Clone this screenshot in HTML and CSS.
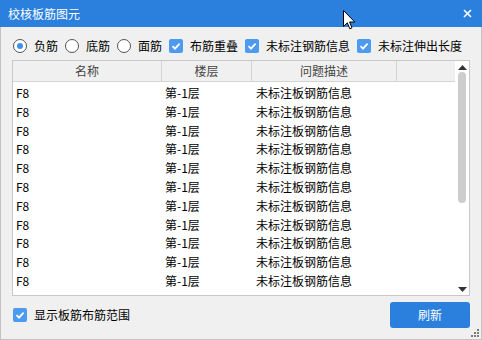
FILE: index.html
```html
<!DOCTYPE html>
<html lang="zh">
<head>
<meta charset="utf-8">
<link rel="stylesheet" href="styles.css">
</head>
<body>
<div class="win">
  <div class="titlebar">
    <span class="title">校核板筋图元</span>
    <svg class="close" width="9" height="9" viewBox="0 0 9 9"><path d="M1 1 L8 8 M8 1 L1 8" stroke="#fff" stroke-width="1.6" fill="none"/></svg>
  </div>
  <div class="body">
    <div class="opts">
      <span class="radio on"></span><span class="lbl">负筋</span>
      <span class="radio"></span><span class="lbl">底筋</span>
      <span class="radio"></span><span class="lbl">面筋</span>
      <span class="cb"><svg width="14" height="14" viewBox="0 0 14 14"><path d="M3.5 7.2 L6 9.6 L10.6 4.6" stroke="#fff" stroke-width="1.8" fill="none"/></svg></span><span class="lbl">布筋重叠</span>
      <span class="cb"><svg width="14" height="14" viewBox="0 0 14 14"><path d="M3.5 7.2 L6 9.6 L10.6 4.6" stroke="#fff" stroke-width="1.8" fill="none"/></svg></span><span class="lbl">未标注钢筋信息</span>
      <span class="cb"><svg width="14" height="14" viewBox="0 0 14 14"><path d="M3.5 7.2 L6 9.6 L10.6 4.6" stroke="#fff" stroke-width="1.8" fill="none"/></svg></span><span class="lbl">未标注伸出长度</span>
    </div>
    <div class="table">
      <div class="main">
        <div class="head">
          <div class="hc c1">名称</div>
          <div class="hc c2">楼层</div>
          <div class="hc c3">问题描述</div>
          <div class="hc c4"></div>
        </div>
        <div class="rows">
          <div class="row"><span class="c1">F8</span><span class="c2">第-1层</span><span class="c3">未标注板钢筋信息</span></div>
          <div class="row"><span class="c1">F8</span><span class="c2">第-1层</span><span class="c3">未标注板钢筋信息</span></div>
          <div class="row"><span class="c1">F8</span><span class="c2">第-1层</span><span class="c3">未标注板钢筋信息</span></div>
          <div class="row"><span class="c1">F8</span><span class="c2">第-1层</span><span class="c3">未标注板钢筋信息</span></div>
          <div class="row"><span class="c1">F8</span><span class="c2">第-1层</span><span class="c3">未标注板钢筋信息</span></div>
          <div class="row"><span class="c1">F8</span><span class="c2">第-1层</span><span class="c3">未标注板钢筋信息</span></div>
          <div class="row"><span class="c1">F8</span><span class="c2">第-1层</span><span class="c3">未标注板钢筋信息</span></div>
          <div class="row"><span class="c1">F8</span><span class="c2">第-1层</span><span class="c3">未标注板钢筋信息</span></div>
          <div class="row"><span class="c1">F8</span><span class="c2">第-1层</span><span class="c3">未标注板钢筋信息</span></div>
          <div class="row"><span class="c1">F8</span><span class="c2">第-1层</span><span class="c3">未标注板钢筋信息</span></div>
          <div class="row"><span class="c1">F8</span><span class="c2">第-1层</span><span class="c3">未标注板钢筋信息</span></div>
        </div>
      </div>
      <div class="scroll">
        <svg class="arr" width="9" height="5" viewBox="0 0 9 5"><path d="M0 5 L4.5 0 L9 5 Z" fill="#333"/></svg>
        <div class="track"><div class="thumb"></div></div>
        <svg class="arr" width="9" height="5" viewBox="0 0 9 5"><path d="M0 0 L9 0 L4.5 5 Z" fill="#333"/></svg>
      </div>
    </div>
    <div class="footer">
      <span class="cb"><svg width="14" height="14" viewBox="0 0 14 14"><path d="M3.5 7.2 L6 9.6 L10.6 4.6" stroke="#fff" stroke-width="1.8" fill="none"/></svg></span><span class="lbl">显示板筋布筋范围</span>
      <span class="spacer"></span>
      <span class="btn">刷新</span>
    </div>
  </div>
  <svg class="grip" width="8" height="8" viewBox="0 0 8 8">
    <rect x="6" y="0" width="2" height="2" fill="#7a7a7a"/>
    <rect x="3" y="3" width="2" height="2" fill="#7a7a7a"/>
    <rect x="6" y="3" width="2" height="2" fill="#7a7a7a"/>
    <rect x="0" y="6" width="2" height="2" fill="#7a7a7a"/>
    <rect x="3" y="6" width="2" height="2" fill="#7a7a7a"/>
    <rect x="6" y="6" width="2" height="2" fill="#7a7a7a"/>
  </svg>
  <svg class="cursor" width="13" height="21" viewBox="0 0 13 21">
    <path d="M0.5 0.5 L0.5 16.5 L4.3 12.8 L6.8 18.8 L9 17.9 L6.6 12 L11.8 12 Z" fill="#fff" stroke="#000" stroke-width="1"/>
  </svg>
</div>
</body>
</html>
```
FILE: styles.css
```css
* { box-sizing: border-box; }
html, body { margin: 0; padding: 0; }
body {
  width: 482px;
  height: 340px;
  overflow: hidden;
  font-family: "Noto Sans CJK SC", "Microsoft YaHei", sans-serif;
  font-size: 12px;
  color: #000;
}
.win {
  position: relative;
  width: 482px;
  height: 340px;
  display: flex;
  flex-direction: column;
  background: #f0f0f0;
}
.titlebar {
  height: 27px;
  flex: none;
  background: #2b80de;
  display: flex;
  align-items: center;
  padding: 0 10px 0 8px;
  color: #fff;
}
.title { flex: 1; font-size: 12px; line-height: 1; }
.close { display: block; }
.body {
  flex: 1;
  display: flex;
  flex-direction: column;
  border: 1px solid #c3c3c3;
  border-top: none;
  padding: 0 11px;
}
.opts {
  height: 33px;
  padding-top: 5px;
  display: flex;
  align-items: center;
  padding-left: 1px;
}
.lbl { line-height: 14px; margin-left: 7px; margin-right: 7px; white-space: nowrap; }
.radio {
  width: 14px; height: 14px;
  border-radius: 50%;
  border: 1px solid #555;
  background: #fff;
  flex: none;
  display: flex; align-items: center; justify-content: center;
}
.radio.on::after {
  content: "";
  width: 6px; height: 6px;
  border-radius: 50%;
  background: #3f90ea;
}
.cb {
  width: 14px; height: 14px;
  flex: none;
  border-radius: 2px;
  background: #4c9bf0;
  display: block;
}
.cb svg { display: block; }
.table {
  height: 236px;
  flex: none;
  border: 1px solid #c8c8c8;
  background: #fff;
  display: flex;
}
.main { flex: 1; display: flex; flex-direction: column; overflow: hidden; }
.head {
  height: 21px;
  flex: none;
  display: grid;
  grid-template-columns: 149px 90px 145px 58px;
  background: #f0f0f0;
  border-bottom: 1px solid #d4d4d4;
  color: #444;
}
.hc {
  text-align: center;
  line-height: 20px;
  border-right: 1px solid #d4d4d4;
}
.hc.c4 { border-right: none; }
.rows { flex: 1; overflow: hidden; padding-top: 2px; }
.row {
  height: 18.8px;
  display: grid;
  grid-template-columns: 149px 90px 145px;
  line-height: 18.8px;
}
.row span { padding-left: 3px; white-space: nowrap; }
.row .c3 { padding-left: 4px; }
.scroll {
  width: 14px;
  flex: none;
  display: flex;
  flex-direction: column;
  align-items: center;
  padding: 4px 0 3px;
}
.arr { display: block; flex: none; }
.track { flex: 1; width: 100%; padding: 2px 3px 0 3px; }
.thumb { width: 8px; height: 131px; border-radius: 4px; background: #cdcdcd; margin-left: 0; }
.footer {
  flex: 1;
  display: flex;
  align-items: center;
  padding-left: 1px;
  padding-bottom: 6px;
}
.footer .cb { margin-top: 0; }
.spacer { flex: 1; }
.btn {
  width: 80px; height: 26px;
  border-radius: 3px;
  background: #2b80de;
  color: #fff;
  display: flex; align-items: center; justify-content: center;
}
.grip { position: absolute; right: 3px; bottom: 3px; display: block; }
.cursor { position: absolute; left: 343px; top: 10px; display: block; }
```
